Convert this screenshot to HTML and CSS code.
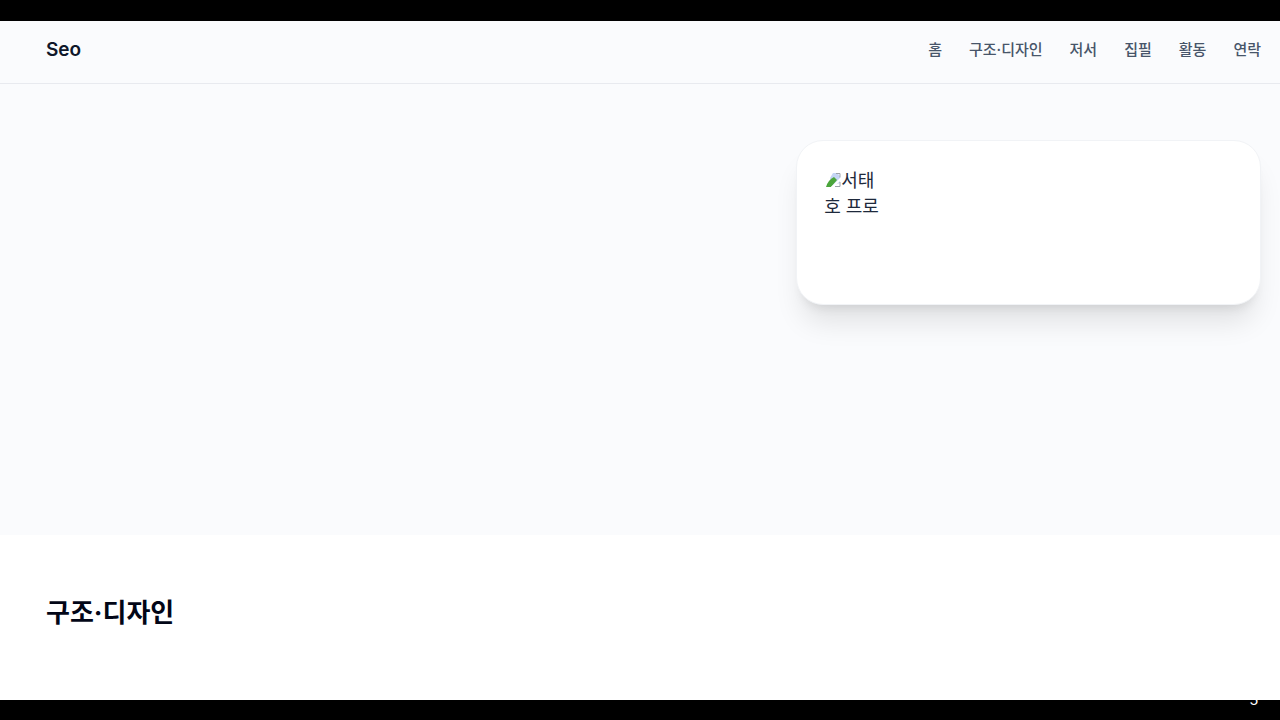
FILE: index.html
```
<!DOCTYPE html>
<html lang="ko">
<head>
    <meta charset="UTF-8">
    <meta name="viewport" content="width=device-width, initial-scale=1.0">
    <title>Seo</title>
    <link rel="stylesheet" href="styles.css">
</head>
<body>

<div class="screen">
    <header class="header">
        <a class="brand" href="#home">Seo</a>
        <nav class="menu">
            <a href="#home">홈</a>
            <a href="#design">구조·디자인</a>
            <a href="#books">저서</a>
            <a href="#writing">집필</a>
            <a href="#activity">활동</a>
            <a href="#contact">연락</a>
        </nav>
    </header>

    <section class="hero" id="home">
        <div class="hero-text"></div>
        <div class="card">
            <div class="profile">
                <svg class="photo-icon" viewBox="0 0 17 16" aria-hidden="true">
                    <path d="M6 6L9 1h4l3 3v7L8 14z" fill="#c5d5f4"/>
                    <path d="M2 15Q4 8 10 5L13 8L7 15z" fill="#4ba53b"/>
                    <path d="M7 15L16 6v3L10 15z" fill="#fff"/>
                    <path d="M11 14.500h5V10M12 1.500h4v4" fill="none" stroke="#9da2aa"/>
                </svg>서태<br>호 프로
            </div>
        </div>
    </section>

    <section class="section" id="design">
        <h2>구조·디자인</h2>
    </section>
</div>

<footer class="footer"><span class="page-number">5</span></footer>

</body>
</html>
```

FILE: styles.css
```
* { box-sizing: border-box; }
body { font-family: Inter, "Noto Sans CJK KR", sans-serif; background-color: #000; color: #1e293b; margin: 0; min-height: 100vh; padding-top: 21px; display: flex; flex-direction: column; }
a { color: inherit; text-decoration: none; }
.screen { flex: 1; background-color: #fff; display: flex; flex-direction: column; }
.header { display: flex; justify-content: space-between; align-items: center; padding: 16px 19px 20px 46px; background-color: #fafbfd; border-bottom: 1px solid #e8eaef; line-height: 26px; }
.brand { font-size: 19px; font-weight: 600; color: #0f172a; }
.menu { display: flex; gap: 27px; font-size: 15px; font-weight: 500; color: #475569; }
.hero { display: grid; grid-template-columns: 3fr 2fr; gap: 53px; align-items: start; padding: 56px 19px 230px 46px; background-color: #fafbfd; }
.card { min-height: 165px; padding: 27px; background-color: #fff; border: 1px solid #f1f3f6; border-radius: 27px; box-shadow: 0 23px 28px -6px rgba(0, 0, 0, 0.1), 0 9px 11px -7px rgba(0, 0, 0, 0.1); }
.profile { width: 54px; font-size: 18px; line-height: 26px; white-space: nowrap; }
.photo-icon { width: 17px; height: 18px; vertical-align: -2px; }
.section { padding: 58px 46px; }
h2 { margin: 0; font-size: 26px; line-height: 40px; font-weight: 700; color: #020617; }
.footer { height: 20px; padding-right: 22px; overflow: hidden; color: #fff; text-align: right; }
.page-number { display: block; margin-top: -8px; font-family: "Liberation Sans", sans-serif; font-size: 15px; line-height: 16px; }
```
